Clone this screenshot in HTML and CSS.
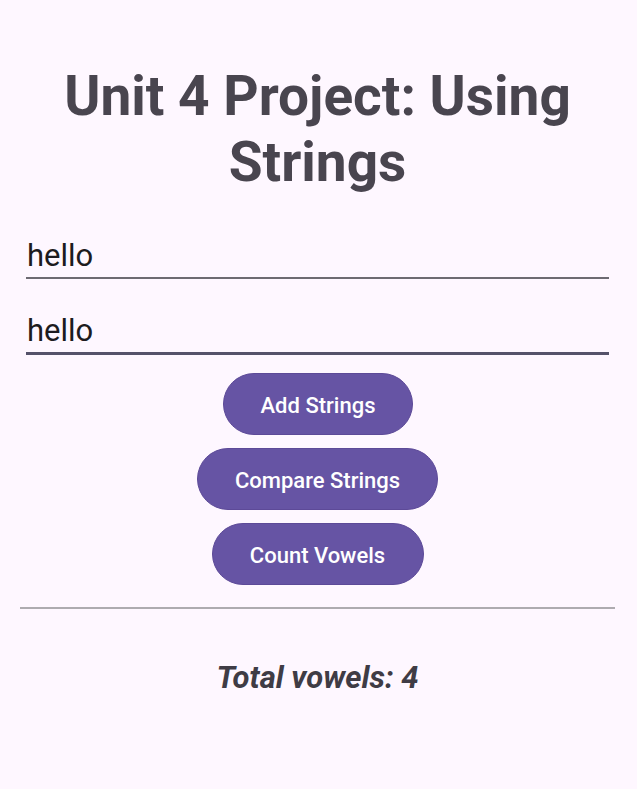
FILE: index.html
```html
<!DOCTYPE html>
<html lang="en">
<head>
<meta charset="utf-8">
<title>Unit 4 Project: Using Strings</title>
<link rel="stylesheet" href="styles.css">
</head>
<body>
<main class="screen">
  <h1 class="title">Unit 4 Project: Using Strings</h1>
  <div class="field"><span class="field-text">hello</span></div>
  <div class="field field-focused"><span class="field-text">hello</span></div>
  <div class="actions">
    <button class="btn btn-add">Add Strings</button>
    <button class="btn btn-compare">Compare Strings</button>
    <button class="btn btn-count">Count Vowels</button>
  </div>
  <hr class="divider">
  <p class="result">Total vowels: 4</p>
</main>
</body>
</html>
```

FILE: styles.css
```css
html, body {
  margin: 0;
  padding: 0;
  background: #FEF7FF;
}
body {
  font-family: Roboto, "Noto Sans", sans-serif;
  width: 637px;
  height: 789px;
  overflow: hidden;
}
.screen {
  display: flex;
  flex-direction: column;
  padding: 63px 22px 0 20px;
}
.title {
  margin: 0;
  font-size: 55px;
  line-height: 66px;
  font-weight: 700;
  color: #49454F;
  text-align: center;
}
.field {
  margin: 41px 6px 0 6px;
  padding-bottom: 1px;
  border-bottom: 2px solid #6d6a72;
}
.field-focused {
  margin-top: 32px;
  border-bottom: 3px solid #55526a;
}
.field-text {
  display: block;
  font-size: 31px;
  line-height: 40px;
  color: #1D1B20;
  padding-left: 1px;
}
.actions {
  margin-top: 18px;
  display: flex;
  flex-direction: column;
  align-items: center;
  gap: 13px;
}
.btn {
  height: 62px;
  border: 1px solid #5d4a98;
  border-radius: 31px;
  background: #6654A4;
  color: #ffffff;
  font-family: Roboto, "Noto Sans", sans-serif;
  font-size: 22px;
  font-weight: 500;
  padding: 2px 0 0 0;
  display: flex;
  align-items: center;
  justify-content: center;
}
.btn-add { width: 190px; margin-left: 1px; }
.btn-compare { width: 241px; }
.btn-count { width: 212px; }
.divider {
  margin: 22px 0 0 0;
  border: 0;
  height: 2px;
  background: #aeabb0;
}
.result {
  margin: 51px 0 0 0;
  font-size: 31px;
  line-height: 36px;
  font-weight: 700;
  font-style: italic;
  color: #3f3c45;
  text-align: center;
}
```
